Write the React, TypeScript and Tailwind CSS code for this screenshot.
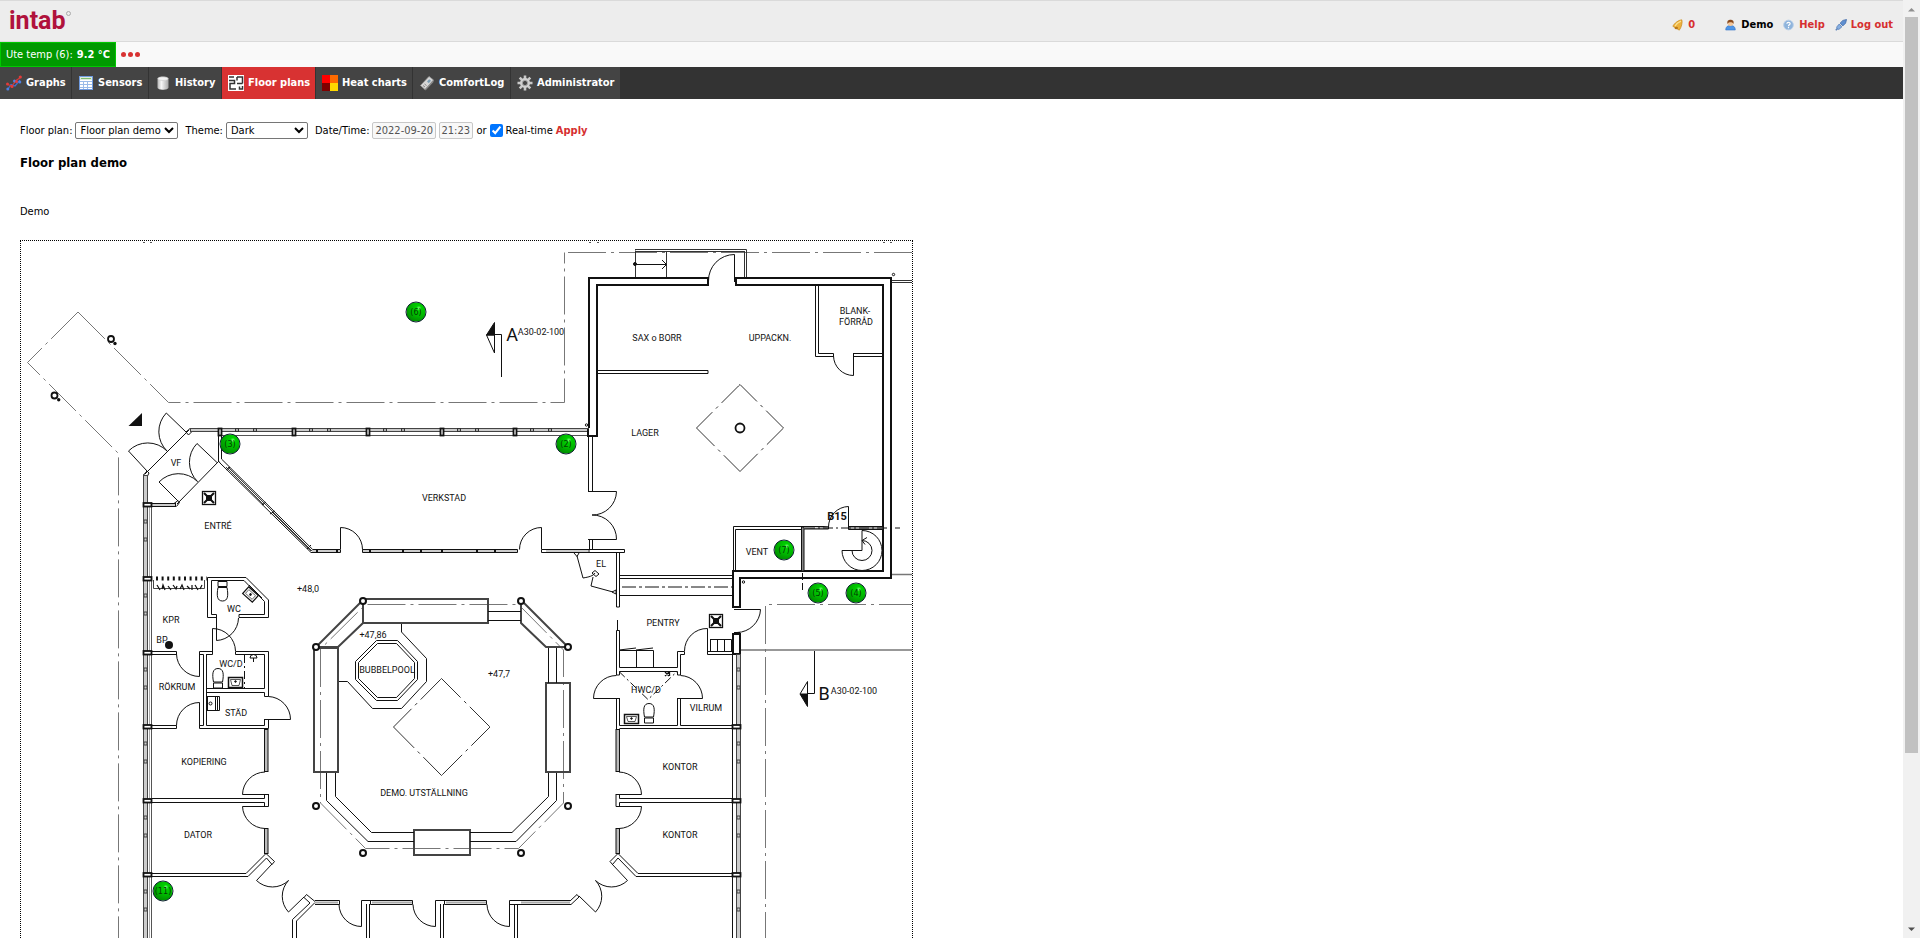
import React from "react";

const NAV_ITEMS = [
  { label: "Graphs", icon: <GraphIcon />, width: "min-w-[72px]" },
  { label: "Sensors", icon: <TableIcon />, width: "min-w-[77px]" },
  { label: "History", icon: <DatabaseIcon />, width: "min-w-[73px]" },
  { label: "Floor plans", icon: <PlanIcon />, width: "min-w-[94px]", active: true },
  { label: "Heat charts", icon: <HeatIcon />, width: "min-w-[97px]" },
  { label: "ComfortLog", icon: <LoggerIcon />, width: "min-w-[98px]" },
  { label: "Administrator", icon: <GearIcon />, width: "min-w-[110px]" },
];

const SENSORS = [
  { id: 6, x: 416, y: 313 },
  { id: 3, x: 230, y: 445 },
  { id: 2, x: 566, y: 445 },
  { id: 7, x: 784, y: 551 },
  { id: 5, x: 818, y: 594 },
  { id: 4, x: 856, y: 594 },
  { id: 11, x: 163, y: 892 },
];

const ROOM_LABELS: [string, number, number][] = [
  ["SAX o BORR", 657, 342],
  ["UPPACKN.", 770, 342],
  ["BLANK-", 855, 315],
  ["FÖRRÅD", 856, 326],
  ["LAGER", 645, 437],
  ["VERKSTAD", 444, 502],
  ["VF", 176, 467],
  ["ENTRÉ", 218, 530],
  ["VENT", 757, 556],
  ["EL", 601, 568],
  ["PENTRY", 663, 627],
  ["HWC/D", 646, 694],
  ["VILRUM", 706, 712],
  ["KPR", 171, 624],
  ["BP", 162, 644],
  ["WC", 234, 613],
  ["WC/D", 231, 668],
  ["RÖKRUM", 177, 691],
  ["STÄD", 236, 717],
  ["+48,0", 308, 593],
  ["+47,86", 373, 639],
  ["BUBBELPOOL", 387, 674],
  ["+47,7", 499, 678],
  ["DEMO. UTSTÄLLNING", 424, 797],
  ["KOPIERING", 204, 766],
  ["DATOR", 198, 839],
  ["KONTOR", 680, 771],
  ["KONTOR", 680, 839],
  ["A30-02-100", 541, 336],
  ["A30-02-100", 854, 695],
];

const PILLARS: [number, number][] = [
  [363, 602], [521, 602], [316, 648], [568, 648],
  [316, 807], [568, 807], [363, 854], [521, 854],
];

function GraphIcon() {
  return (
    <svg width="16" height="16" viewBox="0 0 16 16" fill="none">
      <path d="M2 14 5 9.500 9 11 14 5" stroke="#3f6fd0" strokeWidth="1.2" />
      <path d="M1.500 9.500 6 11 10 5.500 14.500 2.500" stroke="#d43a3a" strokeWidth="1.2" />
      <g fill="#4f80e0"><circle cx="1.800" cy="14" r="1.500" /><circle cx="8.500" cy="6" r="1.500" /><circle cx="13.800" cy="7" r="1.500" /></g>
      <g fill="#e23b3b"><circle cx="1.500" cy="9" r="1.500" /><circle cx="6" cy="11.500" r="1.600" /><circle cx="10.500" cy="6.500" r="1.500" /><circle cx="14.300" cy="2" r="1.600" /></g>
    </svg>
  );
}

function TableIcon() {
  return (
    <svg width="16" height="16" viewBox="0 0 16 16">
      <rect x="1.500" y="1.500" width="13" height="13" fill="#fff" stroke="#6f9be0" />
      <rect x="2" y="2" width="12" height="3" fill="#dcebdc" />
      <path d="M3 3.500H13" stroke="#7dbb6f" />
      <path d="M2 6.500H14M2 9.500H14M2 12.500H14M5.500 6V14M9.500 6V14" stroke="#9bbbe8" />
    </svg>
  );
}

function DatabaseIcon() {
  return (
    <svg width="16" height="16" viewBox="0 0 16 16">
      <defs>
        <linearGradient id="drum"><stop offset="0" stopColor="#b5b5b5" /><stop offset=".35" stopColor="#f7f7f7" /><stop offset="1" stopColor="#a8a8a8" /></linearGradient>
      </defs>
      <path d="M2.500 3.500C2.500 1 13.500 1 13.500 3.500V12.500C13.500 15.500 2.500 15.500 2.500 12.500Z" fill="url(#drum)" />
      <ellipse cx="8" cy="3.700" rx="5" ry="1.800" fill="#f3f3f3" stroke="#c8c8c8" strokeWidth=".6" />
    </svg>
  );
}

function PlanIcon() {
  return (
    <svg width="16" height="16" viewBox="0 0 16 16">
      <rect width="16" height="16" fill="#fff" />
      <path d="M1 2H6M9 2H14.500V8.500M9 2V5.500M1 5.500H6.500V8.500H2V14H8M9 8.500H14.500M11.500 11.500V14H14.500V11" fill="none" stroke="#333" strokeWidth="1.500" />
    </svg>
  );
}

function HeatIcon() {
  return (
    <svg width="16" height="16" viewBox="0 0 16 16">
      <rect width="8" height="8" fill="#f00" />
      <rect x="8" width="8" height="8" fill="#ff6a00" />
      <rect y="8" width="8" height="8" fill="#7f0000" />
      <rect x="8" y="8" width="8" height="8" fill="#ffd800" />
    </svg>
  );
}

function LoggerIcon() {
  return (
    <svg width="16" height="16" viewBox="0 0 16 16">
      <path d="M1.500 10.500 10 1.500 14.500 5 6 14.500Z" fill="#d6d6d6" stroke="#9a9a9a" strokeWidth=".8" />
      <path d="M6 14.500 14.500 5V7L6.500 15.500Z" fill="#8c8c8c" />
      <path d="M8 6.500 10.200 4.300 12 5.800 9.800 8.200Z" fill="#7d9fb5" />
      <path d="M4 10.500 6 12M5.500 9 7.500 10.500" stroke="#888" />
    </svg>
  );
}

function GearIcon() {
  return (
    <svg width="16" height="16" viewBox="0 0 16 16" fill="none">
      <g stroke="#c9c9c9" strokeWidth="2.600">
        <path d="M8 .5V15.500M.5 8H15.500M2.700 2.700 13.300 13.300M13.300 2.700 2.700 13.300" />
      </g>
      <circle cx="8" cy="8" r="5" fill="#d0d0d0" />
      <circle cx="8" cy="8" r="2.600" fill="#444" stroke="#a5a5a5" />
    </svg>
  );
}

function BellIcon() {
  return (
    <svg width="12" height="12" viewBox="0 0 14 14">
      <path d="M11.500 1C8 1 2.500 5 1 8.500L8.500 13C11 10 12.500 4 11.500 1Z" fill="#edb13c" stroke="#c78a1e" strokeWidth=".8" />
      <path d="M10.500 2.500C7.500 3.500 5 6 3.500 8.500" stroke="#fbe08f" strokeWidth="1.500" fill="none" />
      <ellipse cx="5" cy="10.500" rx="2" ry="1.500" fill="#b97817" />
    </svg>
  );
}

function UserIcon() {
  return (
    <svg width="11" height="12" viewBox="0 0 12 12">
      <path d="M.8 11.500C.5 8 3 6.500 6 6.500S11.500 8 11.200 11.500Z" fill="#4f95e6" stroke="#2d6fc4" strokeWidth=".6" />
      <circle cx="6" cy="4.200" r="3" fill="#f3c79b" />
      <path d="M2.700 5C2 1 4 .3 6 .3S10 1 9.300 5C8.500 3 7 3 6 3S3.500 3 2.700 5Z" fill="#8a4a1d" />
    </svg>
  );
}

function HelpIcon() {
  return (
    <svg width="11" height="12" viewBox="0 0 12 12">
      <circle cx="6" cy="6" r="5.300" fill="#8fb4dc" stroke="#b9cfe8" />
      <path d="M4.200 4.600C4.300 2.500 7.900 2.600 7.800 4.600C7.700 5.900 6 5.800 6 7.300M6 8.300V9.500" fill="none" stroke="#fff" strokeWidth="1.300" />
    </svg>
  );
}

function PlugIcon() {
  return (
    <svg width="12" height="12" viewBox="0 0 13 13">
      <path d="M.8 12.200 3 10" stroke="#5b82b8" strokeWidth="1.500" />
      <path d="M2 8.500 4.500 5.500 7.500 8.500 4.500 11C3 12 1.200 10 2 8.500Z" fill="#86aee0" stroke="#4f79b5" strokeWidth=".8" />
      <path d="M5.500 4.500 8.500 1.500 12.500.5 11.500 4.500 8.500 7.500Z" fill="#5f8fd0" stroke="#3f69a8" strokeWidth=".8" />
    </svg>
  );
}

function Toilet({ x, y, flip = false }: { x: number; y: number; flip?: boolean }) {
  return (
    <g transform={flip ? `translate(${x} ${y}) scale(1 -1)` : `translate(${x} ${y})`}>
      <path d="M-4.500 -10H4.500V-5H-4.500ZM-4.500 -4C-6 4 -5.500 9.500 0 9.500S6 4 4.500 -4Z" />
    </g>
  );
}

function VentShaft({ x, y }: { x: number; y: number }) {
  return (
    <g transform={`translate(${x} ${y})`}>
      <rect x="-6.500" y="-6.500" width="13" height="13" strokeWidth="1.300" />
      <path d="M-5 -5 5 5M5 -5 -5 5" strokeWidth="2" />
      <rect x="-2.500" y="-2.500" width="5" height="5" fill="#111" />
    </g>
  );
}

function FloorPlanDrawing() {
  const topColumns = [220, 294, 368, 442, 515];
  const sideColumns = [579, 653, 727, 801, 875];
  const bottomBays = [361, 435, 509];
  return (
    <svg className="block h-auto w-full" viewBox="21 242 891 760" fill="none" stroke="#111" strokeWidth="1" role="img" aria-label="Floor plan drawing">
      {/* Roof outline */}
      <g stroke="#777" strokeDasharray="38 5 3 5">
        <path d="M78 313 168.500 403.500H564.500V253.500" />
        <path d="M78 313 27.500 363.500 118.500 454.500V1002" />
        <path d="M912 253.500H564.500" />
        <path d="M765.500 1002V605.500H912" />
      </g>
      <g stroke="#777">
        <path d="M891 575.500H912M741 651H912" strokeWidth="1.500" />
        <path d="M891 281.500H912M891 283.500H912" stroke="#333" />
      </g>
      <path d="M143 243.500H145M150 243.500H152M589 243.500H591M597 243.500H599M883 243.500H885M890 243.500H892" stroke="#555" />
      <g strokeWidth="1.800">
        <circle cx="111" cy="340" r="3" />
        <circle cx="54.500" cy="396.500" r="3" />
      </g>
      <g fill="#111" stroke="none">
        <circle cx="115" cy="344.500" r="1.700" />
        <circle cx="58.700" cy="400.700" r="1.700" />
        <path d="M142 414V427H128.500Z" />
        <circle cx="169" cy="646" r="4" />
      </g>
      <circle cx="586.500" cy="426" r="1.200" />
      <circle cx="893.500" cy="275.500" r="1.200" />
      <circle cx="743.500" cy="583" r="1.200" />

      {/* Entrance lobby */}
      <path d="M189 431 145 475M219 462 177 505" />
      <path d="M186 433 166.300 414A27 27 0 0 0 167 452" />
      <path d="M147 472 128.500 452A27 27 0 0 1 167 452" />
      <path d="M217 463.500 197 444.500A27 27 0 0 0 197.500 482.500" />
      <path d="M178 502 159 483A27 27 0 0 1 197.500 482.500" />
      <path d="M186 433 190 429.500H192V432.500L188.500 436ZM143.500 476 147 472 149 474 147.500 477ZM174 504.500 178 501.500 179.500 503.500 176.500 507.500" />
      <rect x="151.500" y="504.500" width="24" height="3" fill="#ccc" />
      <VentShaft x={209} y={499} />
      <VentShaft x={716} y={622} />

      {/* Workshop */}
      <rect x="190.500" y="429.500" width="398" height="3" fill="#ccc" stroke="#444" />
      <path d="M220 436.500H589" stroke="#555" />
      {topColumns.map((x) => (
        <g key={x}>
          <rect x={x - 1.5} y="429.500" width="3" height="7" fill="#fff" strokeWidth="1.800" />
          <rect x={x + 15.5} y="429.500" width="3" height="3" fill="#aaa" stroke="#333" />
          <rect x={x + 33.500} y="429.500" width="3" height="3" fill="#aaa" stroke="#333" />
        </g>
      ))}
      <path d="M218.500 437V462L220 464M221.500 437V460L312.700 550.500H340.500V553.500H311L220 464" />
      <path d="M228 468 312 552M226 468 264 506M272 513 311 552" strokeWidth=".8" />
      <path d="M226 471 230 468M262 506 266 503M270 515 275 512M307 550 311 546" />
      <path d="M312 552H340M363 552H517M546 552H588" stroke="#999" />
      <path d="M362.500 550.500H517.500V553.500H362.500ZM541.500 550.500H589V553.500H541.500Z" />
      <path d="M317 550.500V553.500M337 550.500V553.500M370 550.500V553.500M403 550.500V553.500M421 550.500V553.500M442 550.500V553.500M477 550.500V553.500M495 550.500V553.500" strokeWidth="2" />
      <path d="M340.500 550V528.500A22 22 0 0 1 362.500 550.500M541.500 550V528.500A22 22 0 0 0 519.500 550.500" />
      <path d="M588.500 437V492.500M592.500 437V492.500M589.500 540V550.500M592.500 540V550.500" />
      <path d="M589 550.500H624.500V553.500H589" />
      <path d="M588 492.500H616.500A24 24 0 0 1 592 516A24 24 0 0 1 616.500 540.500H588" />

      {/* Storage, outer walls */}
      <g strokeWidth="2">
        <path d="M589 429V279H708V286H597V437H588V430" />
        <path d="M736 279H891V579H740V608H733V572H883V286H736Z" />
        <rect x="733" y="635" width="7" height="20" />
      </g>
      <path d="M740 610.500H760.500A24 24 0 0 1 737 633.500M734 610.500H740M734 633.500H740" />
      <path d="M635.500 278V251.500M635 252.500H745M635 250.500H746.500V278M744.500 252V278M666.500 252V278" stroke="#333" />
      <path d="M635 265.500H666M662 261 666.500 265.500 662 270" />
      <circle cx="635" cy="265" r="1.500" fill="#111" />
      <path d="M734.500 283V255.500A26 26 0 0 0 708.500 282" />
      <path d="M815.500 287V357.500H833.500V354.500H818.500V287M853.500 354.500H883M853.500 357.500H883M853.500 354V376.500A20 20 0 0 1 833.500 357" />
      <path d="M597 371.500H708V374.500H597" />
      <path d="M740 385.500 783.500 429 740 472.500 696.500 429Z" stroke="#333" strokeDasharray="24 5 3 5 24 0" />
      <circle cx="740" cy="429" r="4.500" strokeWidth="1.800" />

      {/* Ventilation room and spiral stair */}
      <path d="M733.500 572V527.500H828M735.500 572V530.500H801" />
      <path d="M801.500 530H828.500V527.500M848.500 527.500H883V530.500H848.500Z" fill="#999" />
      <rect x="801.500" y="528" width="2.500" height="44" fill="#888" />
      <path d="M802.500 574V591" strokeDasharray="7 3" />
      <path d="M805 529H900" strokeDasharray="10 3 2 3" />
      <path d="M848.500 530V507.500A20.500 20.500 0 0 0 828.500 528" />
      <path d="M862 531.500A20 20 0 1 1 842 551.500H862Z" />
      <path d="M852 551.500A10 10 0 1 0 862 541.500M867 538.500 862 541.500 865 545.500" />

      {/* Electrical closet and passage */}
      <path d="M616.500 554V608M619.500 554V608H616.500M617.500 621V632" />
      <path d="M577 557 583 579C589 578 593 577 595 574M593 578 591 587 613 593" />
      <path d="M592 574 595 571.500 599 575 596 577.500ZM574 554 577 557.500 579 554M612 593 616 591V595Z" />
      <path d="M619.500 576.500H733M619.500 579.500H733M619.500 596.500H733" />
      <path d="M622 588H733" strokeDasharray="14 3 3 3" />

      {/* Pantry */}
      <path d="M616.500 631.500V676H619.500V672.500H677.500V676H680.500V655.500H684.500V652.500H677.500V668.500H619.500V631.500Z" />
      <path d="M619 651.500H653.500V668M636.500 651V668M619 651 636 649M636 651 653 649" />
      <path d="M707.500 655.500V629.500A22.500 22.500 0 0 0 684.500 652M707.500 652.500H733M707.500 655.500H733" />
      <path d="M710.500 640.500H731.500V652M710.500 640V652M717.500 640V652M724.500 640V652" />

      {/* Accessible washroom */}
      <path d="M619 672.500 648 700.500 677 672.500" strokeDasharray="8 3 2 3" />
      <path d="M619 699.500H593.500A23 23 0 0 1 616.500 676.500M677 699.500H702.500A23 23 0 0 0 680.500 676.500" />
      <path d="M616.500 699V730M619.500 699V726.500H677.500V699M680.500 699V726.500H732M619.500 729.500H732" />
      <path d="M665 673 669 677M669 673 665 677M669.500 672V677" strokeWidth="1.300" />
      <Toilet x={649} y={714} flip />
      <rect x="624.500" y="715.500" width="14" height="9" strokeWidth="1.500" />
      <path d="M626.500 717.500H636.500L635 722.500H628Z" strokeWidth=".7" />
      <circle cx="631.500" cy="719.500" r=".8" fill="#111" />

      {/* Facades */}
      <rect x="143.500" y="476.500" width="4" height="526" fill="#ccc" stroke="#444" />
      <path d="M149.500 508V1002" stroke="#aaa" />
      <path d="M151.500 508V1002" stroke="#555" />
      <rect x="736.500" y="655.500" width="4" height="347" fill="#ccc" stroke="#444" />
      <path d="M732.500 655V1002" />
      <g fill="#fff" strokeWidth="1.800">
        <rect x="143.500" y="504" width="8" height="3.500" />
        {sideColumns.map((y) => (
          <rect key={y} x="143.500" y={y - 1} width="8" height="3.500" />
        ))}
        {sideColumns.slice(2).map((y) => (
          <rect key={y} x="732.500" y={y - 1} width="8" height="3.500" />
        ))}
      </g>
      <g fill="#ccc" stroke="#444">
        {[505, ...sideColumns].map((y) => (
          <g key={y}>
            <rect x="144" y={y + 16} width="3" height="3" />
            <rect x="144" y={y + 34} width="3" height="3" />
          </g>
        ))}
        {sideColumns.slice(1).map((y) => (
          <g key={y}>
            <rect x="737" y={y + 16} width="3" height="3" />
            <rect x="737" y={y + 34} width="3" height="3" />
          </g>
        ))}
      </g>

      {/* Cloakroom */}
      <path d="M156 579.500H207" strokeWidth="4" strokeDasharray="2 3.600" />
      <path d="M153.500 581V589.500H204.500V581" stroke="#444" />
      <path d="M157 586 160 591M162 590 163 586 165 591M168 587 171 591M173 586 176 590 177 587M180 590 182 586 184 591M187 587 190 590M192 586V591M195 586 198 591M200 590 202 586" strokeWidth="1.200" />

      {/* Washrooms */}
      <path d="M207.500 618.500V578.500H246L268.500 601V618.500H239V615.500H264.500V602.500L244 581.500H211.500V615.500H216.500V618.500Z" />
      <path d="M216.500 618V641.500A23 23 0 0 0 238.500 619M212.500 655V629.500A23 23 0 0 1 235.500 652" />
      <Toilet x={222.5} y={592.5} />
      <g transform="translate(250.500 595.500) rotate(42)">
        <rect x="-6.500" y="-4.500" width="13" height="9" strokeWidth="1.200" />
        <rect x="-4.500" y="-2.500" width="9" height="5" strokeWidth=".6" />
        <circle r=".8" fill="#111" />
      </g>
      <path d="M249 586 262 599" />
      <path d="M152 652.500H176.500V655.500H152M199.500 652.500V677.500A23 23 0 0 1 176.500 655" />
      <path d="M199.500 652.500H212.500V655.500H207M199.500 655.500H203.500V726.500H199.500M206.500 655V726.500" />
      <path d="M235.500 652.500H268.500V697.500H264.500V693.500H206.500V689.500H264.500V655.500H235.500Z" />
      <path d="M244.500 656V689" strokeDasharray="8 3 2 3" />
      <path d="M250 659A3.500 3.500 0 0 1 257 659ZM253.500 659V663" />
      <Toilet x={218} y={679} flip />
      <rect x="228.500" y="678.500" width="14" height="10" strokeWidth="1.500" />
      <path d="M230.500 680.500H240.500L239 686.500H232Z" strokeWidth=".7" />
      <circle cx="235.500" cy="682.500" r=".8" fill="#111" />
      <rect x="207.500" y="697.500" width="8" height="14" />
      <path d="M215.500 697.500H219.500V711.500H215.500M217.500 697.500V711.500" />
      <circle cx="210.500" cy="704.500" r="1.500" />
      <path d="M268.500 720.500V729.500H199.500V703.500A23 23 0 0 0 176.500 726.500V729.500H152M152 726.500H176.500M206.500 726.500H264.500V720" />
      <path d="M264.500 720.500H290.500A23 23 0 0 0 268.500 697.500" />

      {/* Left offices */}
      <rect x="264.500" y="730.500" width="3.500" height="42" fill="#bbb" />
      <rect x="264.500" y="829.500" width="3.500" height="25" fill="#bbb" />
      <path d="M268.500 795.500H242.500A23 23 0 0 1 265 773M268.500 807.500H242.500A23 23 0 0 0 265 829.500" />
      <path d="M268.500 795V807.500M264.500 795V799.500H152M152 803.500H264.500V807" />
      <path d="M152 874.500H246L266 854.500 274.500 862.500 272 865.500 266.500 859 248 877.500H152" />
      <path d="M272 865 256.500 881.500A23 23 0 0 0 288.500 881.500A23 23 0 0 0 288.500 913L304 898" />
      <path d="M306.500 895.500 315 902.500M306.500 895.500 304 898.500 310 904 292.500 920.500V1002M315 903.500 296.500 922V1002" />

      {/* Right offices */}
      <rect x="616" y="730.500" width="3.500" height="42" fill="#bbb" />
      <rect x="616" y="829.500" width="3.500" height="25" fill="#bbb" />
      <path d="M616 795.500H641.500A23 23 0 0 0 619 773M616 807.500H641.500A23 23 0 0 1 619 829.500" />
      <path d="M616 795V807.500M619.500 795V799.500H732M732 803.500H619.500V807" />
      <path d="M732 874.500H638L618 854.500 610 862.500 612.500 865.500 618 859 636 877.500H732" />
      <path d="M612 865 627.500 881.500A23 23 0 0 1 595.500 881.500A23 23 0 0 1 595.500 913L579 897" />
      <path d="M510 905.500H571L579 898 577 895.500 570 902" />

      {/* Lower bays */}
      <path d="M315 903.500H338M372 903.500H412M446 903.500H486M521 903.500H570" stroke="#aaa" strokeWidth="2" />
      <path d="M315 901.500H339.500V905.500H315M370.500 905.500V901.500M412.500 901.500V905.500H370.500M486.500 901.500V905.500H444.500V901.500M361.500 901.500H412.500M435.500 901.500H486.500M509.500 901.500H570" />
      {bottomBays.map((x) => (
        <path key={x} d={`M${x + 0.5} 901.500V927.500A22.500 22.500 0 0 1 ${x - 22} 905.500M${x + 5.5} 905V1002M${x + 8.5} 905V1002`} />
      ))}

      {/* Exhibition area */}
      <path d="M320.500 650V804L365.500 849.500H518.500L563.500 804V651L518.500 605.500H365.500Z" stroke="#777" strokeDasharray="38 5 3 5" />
      <g stroke="#444" strokeWidth="2">
        <rect x="363" y="600" width="125" height="24" />
        <rect x="314" y="649" width="24" height="124" />
        <rect x="546" y="684" width="24" height="89" />
        <rect x="414" y="831" width="56" height="25" />
        <path d="M363 601 316 648H338L363 624Z" />
        <path d="M521 601 568 648H546L521 624Z" />
      </g>
      <path d="M488 612.500H521M488 621.500H521M548.500 649V684M556.500 649V684" />
      <path d="M548.500 774V797.500L512 833.500H470M556.500 774V801.500L516 842.500H470M326.500 774V801.500L368 842.500H414M335.500 774V797.500L371.500 833.500H414" />
      <path d="M376.500 641.500H397.500L417.500 662.500V680.500L397.500 701.500H376.500L355.500 680.500V662.500Z" />
      <path d="M377.500 644.500H396.500L414.500 663.500V679.500L396.500 698.500H377.500L358.500 679.500V663.500Z" />
      <path d="M401.500 625V633L426.500 659.500V682.500L401.500 709.500H372.500L347.500 682.500H339" />
      <path d="M441.500 679.500 490 728 441.500 776.500 393.500 728Z" stroke="#333" strokeDasharray="27 5 3 5 28 0" />
      <g fill="#fff" strokeWidth="2">
        {PILLARS.map(([x, y]) => (
          <circle key={`${x}-${y}`} cx={x} cy={y} r="3" />
        ))}
      </g>

      {/* Section markers */}
      <path d="M486.500 336 494.500 354V336ZM494.500 335.500H501.500V378M800 695 807.500 682.500V695M807.500 694.500H814.500V652" />
      <path d="M486.500 336 494.500 323.500V336ZM800 695 807.500 707.500V695Z" fill="#111" />

      <g fill="#111" stroke="none" className="font-['Roboto',sans-serif]" textAnchor="middle">
        {ROOM_LABELS.map(([text, x, y]) => (
          <text key={`${text}-${x}-${y}`} x={x} y={y} className="text-[9px]">{text}</text>
        ))}
        <text x="837" y="521" className="text-[11px] font-bold">B15</text>
        <text x="512" y="342" className="text-[18px]">A</text>
        <text x="824" y="701" className="text-[18px]">B</text>
      </g>
    </svg>
  );
}

function Scrollbar() {
  return (
    <div aria-hidden="true" className="flex h-screen w-[17px] shrink-0 flex-col items-center bg-[#f1f1f1]">
      <svg width="17" height="17" viewBox="0 0 17 17" className="shrink-0"><path d="M5 11.500 8.500 8 12 11.500Z" fill="#8f8f8f" /></svg>
      <div className="h-[78.5%] w-[13px] bg-[#c1c1c1]" />
      <svg width="17" height="17" viewBox="0 0 17 17" className="mt-auto shrink-0"><path d="M5 6.500 8.500 10 12 6.500Z" fill="#505050" /></svg>
    </div>
  );
}

export default function App() {
  return (
    <div className="flex h-screen overflow-hidden bg-white font-['DejaVu_Sans_Condensed','DejaVu_Sans',sans-serif] text-[11px] leading-4 text-black">
      <div className="min-w-0 flex-1">
        <header className="flex h-[42px] items-center justify-between border-y border-[#dadada] bg-[#ededed] pr-2.5 pl-[9px]">
          <a href="#" className="flex items-start font-['Roboto',sans-serif] text-[25px] leading-10 font-bold text-[#b0123c]">
            intab
            <span className="mt-2.5 size-[5px] rounded-full border border-[#aaa]" />
          </a>
          <div className="flex items-center pt-2 font-bold text-[#d62f2f]">
            <a href="#" className="flex items-center gap-1"><BellIcon />0</a>
            <span className="ml-[30px] flex items-center gap-[5px] text-black"><UserIcon />Demo</span>
            <a href="#" className="ml-2.5 flex items-center gap-[5px]"><HelpIcon />Help</a>
            <a href="#" className="ml-2.5 flex items-center gap-1"><PlugIcon />Log out</a>
          </div>
        </header>

        <div className="flex h-[25px] items-stretch bg-[#f9f9f9]">
          <a href="#" className="flex min-w-[116px] items-center gap-1 border border-[#00c800] bg-[#009900] px-[5px] text-white">
            Ute temp (6): <b>9.2 °C</b>
          </a>
          <button type="button" aria-label="More" className="flex items-center gap-0.5 pl-[5px]">
            <span className="size-[5px] rounded-full bg-[#d83232]" />
            <span className="size-[5px] rounded-full bg-[#d83232]" />
            <span className="size-[5px] rounded-full bg-[#d83232]" />
          </button>
        </div>

        <nav className="flex h-8 bg-[#333]">
          {NAV_ITEMS.map((item) => (
            <a
              key={item.label}
              href="#"
              className={`flex items-center gap-1 border-r border-[#333] pl-1.5 font-bold text-white ${item.width} ${item.active ? "bg-[#d83232]" : "bg-[#444]"}`}
            >
              {item.icon}
              <span className="whitespace-nowrap">{item.label}</span>
            </a>
          ))}
        </nav>

        <main className="px-5 pt-[23px]">
          <form className="flex items-center gap-[3px]" onSubmit={(e) => e.preventDefault()}>
            <label htmlFor="plan">Floor plan:</label>
            <select id="plan" className="h-[17px] w-[103px] rounded-[2px] border border-[#767676] bg-white">
              <option>Floor plan demo</option>
            </select>
            <label htmlFor="theme" className="ml-1">Theme:</label>
            <select id="theme" className="h-[17px] w-[82px] rounded-[2px] border border-[#767676] bg-white">
              <option>Dark</option>
            </select>
            <label htmlFor="date" className="ml-1">Date/Time:</label>
            <input id="date" disabled defaultValue="2022-09-20" className="h-[17px] w-16 rounded-[2px] border border-[#c8c8c8] bg-[#f8f8f8] px-0.5 text-[#545454]" />
            <input aria-label="Time" disabled defaultValue="21:23" className="h-[17px] w-[34px] rounded-[2px] border border-[#c8c8c8] bg-[#f8f8f8] px-px text-[#545454]" />
            <span>or</span>
            <input id="realtime" type="checkbox" defaultChecked className="size-[13px]" />
            <label htmlFor="realtime">Real-time</label>
            <button type="submit" className="font-bold text-[#d62f2f]">Apply</button>
          </form>

          <h1 className="mt-4 text-[13px] leading-4 font-bold">Floor plan demo</h1>
          <p className="mt-[33px]">Demo</p>

          <div className="relative mt-5 w-[893px] border border-dotted border-black">
            <FloorPlanDrawing />
            {SENSORS.map((s) => (
              <button
                key={s.id}
                type="button"
                aria-label={`Sensor ${s.id}`}
                className="absolute size-[21px] -translate-1/2 rounded-full border border-[#123] bg-[radial-gradient(circle_at_65%_30%,#7dff7d_0%,#00d000_14%,#00b400_45%,#007000_100%)] text-[9px] leading-[19px] text-[#043d04]"
                style={{ left: s.x - 21, top: s.y - 242 }}
              >
                ({s.id})
              </button>
            ))}
          </div>
        </main>
      </div>
      <Scrollbar />
    </div>
  );
}
